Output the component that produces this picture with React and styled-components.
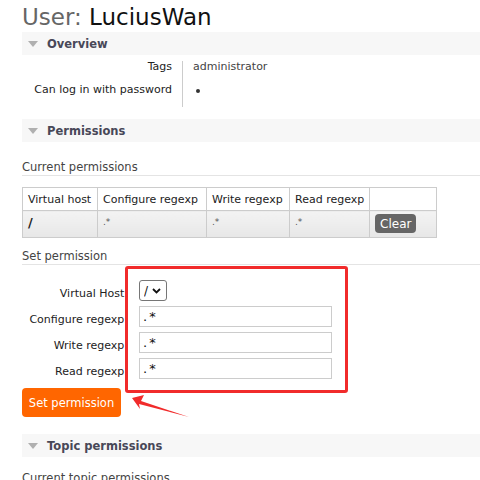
import React from 'react'
import styled, { createGlobalStyle } from 'styled-components'

const GlobalStyle = createGlobalStyle`
  body {
    margin: 0;
    background: #fff;
    font-family: "DejaVu Sans", Verdana, sans-serif;
    font-size: 11px;
    color: #333;
  }
`

const Page = styled.div`
  position: relative;
  height: 480px;
  overflow: hidden;
  padding-left: 22px;
`

const Title = styled.h1`
  margin: 0;
  height: 32px;
  padding-top: 4px;
  box-sizing: border-box;
  font-size: 23px;
  line-height: 26px;
  font-weight: normal;
  color: #666;
  white-space: nowrap;

  b {
    font-weight: normal;
    color: #111;
  }
`

const SectionHeader = styled.h2`
  margin: ${p => p.$top || 0}px 0 0;
  height: 23px;
  display: flex;
  align-items: center;
  gap: 9px;
  padding-left: 6px;
  background: #f7f7f7;
  font-size: 11.5px;
  font-weight: bold;
  color: #484858;
`

const Triangle = styled.span`
  width: 0;
  height: 0;
  border-left: 5px solid transparent;
  border-right: 5px solid transparent;
  border-top: 6px solid #b0b0b0;
`

const Facts = styled.div`
  display: grid;
  grid-template-columns: 161px 1fr;
  margin: 6px 0 12px;
  line-height: 12px;
`

const FactLabel = styled.div`
  text-align: right;
  padding: 0 10px 11px 0;
  border-right: 1px solid #ccc;
  color: #222;
`

const FactValue = styled.div`
  padding: 0 0 11px 10px;
  color: #444;
`

const Dot = styled.span`
  display: inline-block;
  width: 4px;
  height: 4px;
  margin: 5px 0 0 3px;
  border-radius: 50%;
  background: #333;
`

const SubHeading = styled.h3`
  margin: ${p => p.$top}px 0 0;
  padding-bottom: 1px;
  border-bottom: 1px solid #e4e4e4;
  font-size: 11.5px;
  line-height: 14px;
  font-weight: normal;
  color: #444;
`

const Table = styled.table`
  margin-top: 11px;
  border-collapse: collapse;
  font-size: 11px;
  color: #222;

  th, td {
    border: 1px solid #ccc;
    padding: 0 5px;
    text-align: left;
    white-space: nowrap;
  }
  th {
    height: 22px;
    font-weight: normal;
    background: #fff;
  }
  td {
    height: 27px;
    vertical-align: top;
    padding-top: 4px;
    box-sizing: border-box;
    background: linear-gradient(#f3f3f3, #e7e7e7);
  }
`

const Regexp = styled.span`
  font-size: 9px;
  color: #555;
`

const VHost = styled.span`
  font-size: 13px;
  font-weight: bold;
`

const ClearButton = styled.button`
  margin-top: -1px;
  width: 41px;
  height: 19px;
  padding: 0;
  border: 0;
  border-radius: 4px;
  background: #666;
  color: #fff;
  font-family: inherit;
  font-size: 12px;
`

const Form = styled.div`
  display: grid;
  grid-template-columns: 106px 193px;
  grid-auto-rows: 21px;
  column-gap: 11px;
  row-gap: 5px;
  margin-top: 15px;
  align-items: center;
`

const FormLabel = styled.label`
  padding-top: 5px;
  text-align: right;
  font-size: 11px;
  color: #222;
  white-space: nowrap;
`

const SelectBox = styled.div`
  display: flex;
  align-items: center;
  gap: 3px;
  width: 28px;
  height: 21px;
  box-sizing: border-box;
  padding-left: 4px;
  border: 1px solid #767676;
  border-radius: 3px;

  select {
    appearance: none;
    border: 0;
    padding: 0;
    background: none;
    font-family: inherit;
    font-size: 12px;
    color: #111;
  }
`

const TextInput = styled.input`
  width: 193px;
  height: 21px;
  box-sizing: border-box;
  padding: 0 3px;
  border: 1px solid #ccc;
  font-family: inherit;
  font-size: 13px;
  letter-spacing: 2px;
  color: #111;
`

const PrimaryButton = styled.button`
  display: block;
  margin-top: 9px;
  width: 99px;
  height: 29px;
  padding: 0;
  border: 0;
  border-radius: 4px;
  background: #ff6600;
  color: #fff;
  font-family: inherit;
  font-size: 11.5px;
`

const Highlight = styled.div`
  position: absolute;
  left: 125px;
  top: 266px;
  width: 223px;
  height: 127px;
  box-sizing: border-box;
  border: 3px solid #f12b2b;
  border-radius: 3px;
  pointer-events: none;
`

const Arrow = styled.svg`
  position: absolute;
  left: 128px;
  top: 390px;
`

const regexps = ['.*', '.*', '.*']

export default function App() {
  return (
    <Page>
      <GlobalStyle />
      <Title>User: <b>LuciusWan</b></Title>

      <SectionHeader><Triangle />Overview</SectionHeader>
      <Facts>
        <FactLabel>Tags</FactLabel>
        <FactValue>administrator</FactValue>
        <FactLabel>Can log in with password</FactLabel>
        <FactValue><Dot /></FactValue>
      </Facts>

      <SectionHeader><Triangle />Permissions</SectionHeader>
      <SubHeading $top={18}>Current permissions</SubHeading>
      <Table>
        <thead>
          <tr>
            <th style={{ width: 64 }}>Virtual host</th>
            <th style={{ width: 98 }}>Configure regexp</th>
            <th style={{ width: 72 }}>Write regexp</th>
            <th style={{ width: 69 }}>Read regexp</th>
            <th style={{ width: 56 }}></th>
          </tr>
        </thead>
        <tbody>
          <tr>
            <td><VHost>/</VHost></td>
            {regexps.map((r, i) => <td key={i}><Regexp>{r}</Regexp></td>)}
            <td><ClearButton>Clear</ClearButton></td>
          </tr>
        </tbody>
      </Table>

      <SubHeading $top={11}>Set permission</SubHeading>
      <Form>
        <FormLabel>Virtual Host:</FormLabel>
        <SelectBox>
          <select defaultValue="/"><option>/</option></select>
          <svg width="9" height="6" viewBox="0 0 9 6">
            <path d="M1 1l3.5 3.5L8 1" fill="none" stroke="#111" strokeWidth="1.8" />
          </svg>
        </SelectBox>
        <FormLabel>Configure regexp:</FormLabel>
        <TextInput defaultValue=".*" />
        <FormLabel>Write regexp:</FormLabel>
        <TextInput defaultValue=".*" />
        <FormLabel>Read regexp:</FormLabel>
        <TextInput defaultValue=".*" />
      </Form>
      <PrimaryButton>Set permission</PrimaryButton>

      <SectionHeader $top={17}><Triangle />Topic permissions</SectionHeader>
      <SubHeading $top={14}>Current topic permissions</SubHeading>

      <Highlight />
      <Arrow width="64" height="30" viewBox="0 0 64 30">
        <polygon points="4,8 16,5 13,11 61,27 11,14 12,19" fill="#f12b2b" />
      </Arrow>
    </Page>
  )
}
